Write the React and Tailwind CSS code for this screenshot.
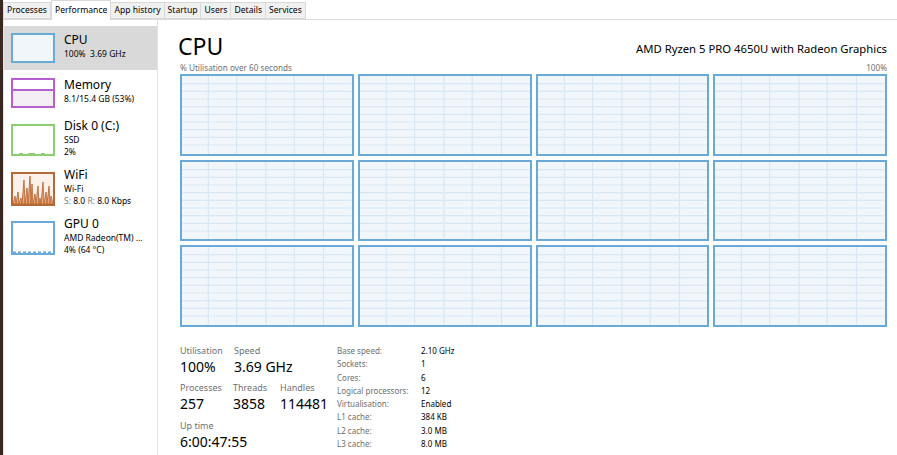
import React from "react";

const font = { fontFamily: '"Noto Sans", "Open Sans", sans-serif' };

const tabs = ["Processes", "Performance", "App history", "Startup", "Users", "Details", "Services"];

// grid inside each cpu core chart
const CoreCell = () => (
  <div className="border-2 border-[#6aaad8] bg-[#f1f6fb]">
    <svg viewBox="0 0 174 81" preserveAspectRatio="none" className="block h-full w-full">
      {[27, 56, 86, 115, 145].map((x) => (
        <line key={x} x1={x} y1="0" x2={x} y2="81" stroke="#d8e7f3" strokeWidth="1.2" />
      ))}
      {[8, 16, 24, 32, 40, 48, 56, 64, 72].map((y) => (
        <line key={y} x1="0" y1={y} x2="174" y2={y} stroke="#d8e7f3" strokeWidth="1.2" />
      ))}
    </svg>
  </div>
);

const Thumb = ({ kind }) => {
  if (kind === "cpu")
    return <div className="h-[30px] w-[44px] border-2 border-[#6aaad8] bg-[#f1f6fb]" />;
  if (kind === "mem")
    return (
      <div className="flex h-[30px] w-[44px] flex-col border-2 border-[#b85fd0]">
        <div className="h-[11px] border-b-2 border-[#b85fd0] bg-white" />
        <div className="flex-1 bg-[#f2eef4]" />
      </div>
    );
  if (kind === "disk")
    return (
      <div className="h-[32px] w-[44px] border-2 border-[#8ccf6e] bg-white">
        <svg viewBox="0 0 40 28" preserveAspectRatio="none" className="block h-full w-full">
          <path d="M6 27.5 H10 M15 27.5 H22 M28 27.5 H32" stroke="#8ccf6e" strokeWidth="1" />
        </svg>
      </div>
    );
  if (kind === "wifi")
    return (
      <div className="h-[34px] w-[44px] border-2 border-[#b56a36] bg-[#fbf1ea]">
        <svg viewBox="0 0 40 30" preserveAspectRatio="none" className="block h-full w-full">
          <path
            d="M0 30 L2 22 L3 30 L5 18 L6 30 L8 24 L9 30 L11 6 L12 30 L14 14 L15 30 L17 2 L18 30 L19 10 L20 30 L22 20 L23 30 L25 12 L26 30 L27 24 L28 30 L30 8 L31 30 L33 18 L34 30 L36 12 L37 30 L38 22 L40 30 Z"
            fill="#e7a77a"
            stroke="#b5602b"
            strokeWidth="0.8"
          />
        </svg>
      </div>
    );
  return (
    <div className="h-[34px] w-[44px] border-2 border-[#6aaad8] bg-white">
      <svg viewBox="0 0 40 30" preserveAspectRatio="none" className="block h-full w-full">
        <path d="M0 29.3 H40" stroke="#6aaad8" strokeWidth="1.4" strokeDasharray="3 2" />
      </svg>
    </div>
  );
};

const items = [
  { kind: "cpu", title: "CPU", lines: ["100%  3.69 GHz"], h: "h-[44px]", active: true },
  { kind: "mem", title: "Memory", lines: ["8.1/15.4 GB (53%)"], h: "h-[46px]" },
  { kind: "disk", title: "Disk 0 (C:)", lines: ["SSD", "2%"], h: "h-[47px]" },
  { kind: "wifi", title: "WiFi", lines: ["Wi-Fi", "wifi"], h: "h-[51px]" },
  { kind: "gpu", title: "GPU 0", lines: ["AMD Radeon(TM) ...", "4% (64 °C)"], h: "h-[48px]" },
];

const specs = [
  ["Base speed:", "2.10 GHz"],
  ["Sockets:", "1"],
  ["Cores:", "6"],
  ["Logical processors:", "12"],
  ["Virtualisation:", "Enabled"],
  ["L1 cache:", "384 KB"],
  ["L2 cache:", "3.0 MB"],
  ["L3 cache:", "8.0 MB"],
];

const Stat = ({ label, value, className }) => (
  <div className={className}>
    <div className="text-[9px] leading-[12px] text-[#707070]">{label}</div>
    <div className="mt-[1px] text-[14px] leading-[17px] text-black">{value}</div>
  </div>
);

export default function App() {
  return (
    <div className="flex h-[455px] w-[897px] overflow-hidden bg-white" style={font}>
      <div className="w-[3px] bg-[#3b2722]" />
      <div className="flex flex-1 flex-col">
        {/* tabs */}
        <div className="flex h-[20px] items-end border-b border-[#d9d9d9] pl-[1px]">
          {tabs.map((t) => (
            <div
              key={t}
              className={
                t === "Performance"
                  ? "-mb-px flex h-[20px] items-center border border-b-0 border-[#d9d9d9] bg-white px-[3px] text-[8.6px] text-black"
                  : "-ml-px flex h-[17px] items-center border border-[#d9d9d9] bg-[#f0f0f0] px-[3px] text-[8.6px] text-black"
              }
            >
              {t}
            </div>
          ))}
        </div>

        <div className="flex flex-1">
          {/* sidebar */}
          <div className="w-[155px] border-r border-l border-[#e3e3e3] pt-[6px]">
            {items.map((it) => (
              <div
                key={it.title}
                className={
                  (it.active ? "bg-[#d9d9d9] " : "") + "flex items-center gap-[9px] pl-[7px] " + it.h
                }
              >
                <Thumb kind={it.kind} />
                <div className="-mt-[4px] flex flex-col">
                  <div className="text-[12px] leading-[16px] text-black">{it.title}</div>
                  {it.lines.map((l) =>
                    l === "wifi" ? (
                      <div key={l} className="text-[8.5px] leading-[12px] text-black">
                        <span className="text-[#808080]">S:</span> 8.0 <span className="text-[#808080]">R:</span> 8.0 Kbps
                      </div>
                    ) : (
                      <div key={l} className="whitespace-pre text-[8.5px] leading-[12px] text-black">
                        {l}
                      </div>
                    )
                  )}
                </div>
              </div>
            ))}
          </div>

          {/* main */}
          <div className="flex flex-1 flex-col pl-[22px] pr-[10px]">
            <div className="mt-[13px] flex items-end justify-between">
              <div className="-ml-[2px] text-[23px] leading-[26px] text-black">CPU</div>
              <div className="mb-[2px] text-[11.3px] leading-[16px] text-black">
                AMD Ryzen 5 PRO 4650U with Radeon Graphics
              </div>
            </div>
            <div className="mt-[3px] flex justify-between text-[8.2px] leading-[11px] text-[#707070]">
              <span>% Utilisation over 60 seconds</span>
              <span>100%</span>
            </div>
            <div className="mt-[1px] grid h-[253px] grid-cols-4 grid-rows-3 gap-[4px]">
              {Array.from({ length: 12 }).map((_, i) => (
                <CoreCell key={i} />
              ))}
            </div>

            <div className="mt-[18px] flex">
              <div className="w-[157px]">
                <div className="flex">
                  <Stat label="Utilisation" value="100%" className="w-[54px]" />
                  <Stat label="Speed" value="3.69 GHz" />
                </div>
                <div className="mt-[7px] flex">
                  <Stat label="Processes" value="257" className="w-[53px]" />
                  <Stat label="Threads" value="3858" className="w-[47px]" />
                  <Stat label="Handles" value="114481" />
                </div>
                <Stat label="Up time" value="6:00:47:55" className="mt-[8px]" />
              </div>
              <div className="-mt-[1px] flex flex-col">
                {specs.map(([k, v]) => (
                  <div key={k} className="flex text-[8px] leading-[13.3px]">
                    <span className="w-[84px] text-[#707070]">{k}</span>
                    <span className="text-black">{v}</span>
                  </div>
                ))}
              </div>
            </div>
          </div>
        </div>
      </div>
    </div>
  );
}
